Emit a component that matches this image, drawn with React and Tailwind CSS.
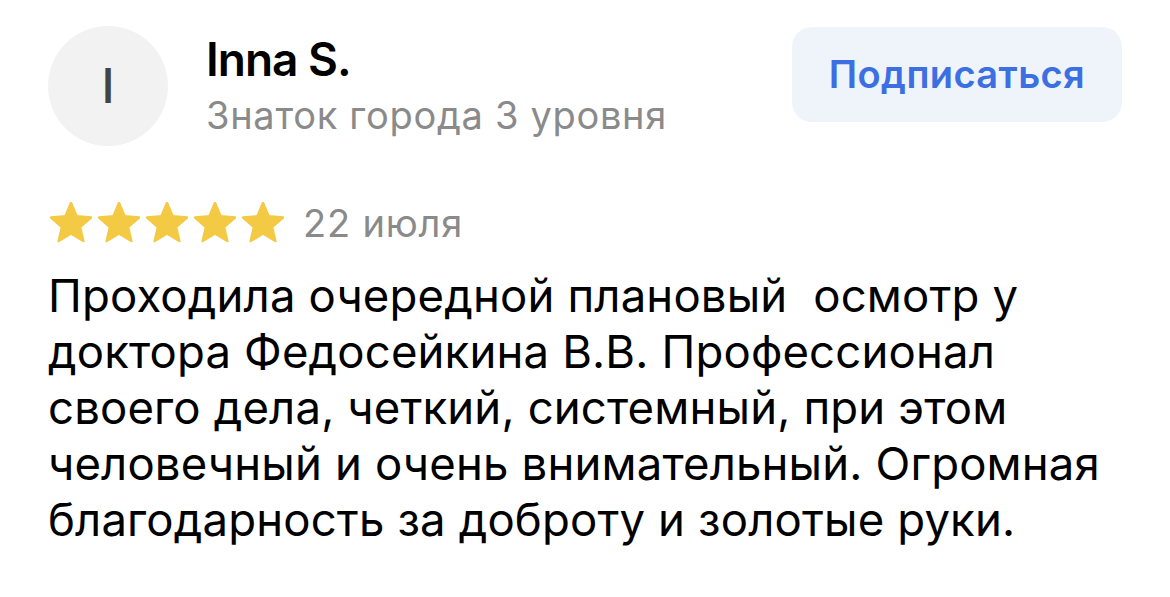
const STARS = [1, 2, 3, 4, 5];

const LINES = [
  "Проходила очередной плановый  осмотр у",
  "доктора Федосейкина В.В. Профессионал",
  "своего дела, четкий, системный, при этом",
  "человечный и очень внимательный. Огромная",
  "благодарность за доброту и золотые руки.",
];

function StarIcon() {
  return (
    <svg width="44" height="42" viewBox="0 0 44 42">
      <polygon
        points="22,1 27.58,14.31 41.97,15.51 31.03,24.94 34.34,38.99 22,31.5 9.66,38.99 12.97,24.94 2.03,15.51 16.42,14.31"
        fill="#f4c944"
        stroke="#f4c944"
        strokeWidth="2.5"
        strokeLinejoin="round"
      />
    </svg>
  );
}

export default function App() {
  return (
    <div
      className="w-[1170px] h-[597px] bg-white overflow-hidden"
      style={{ fontFamily: "Inter, sans-serif" }}
    >
      <div className="pl-[48px] pr-[48px] pt-[26px]">
        {/* HEADER */}
        <div className="flex items-start">
          <div className="w-[120px] h-[120px] shrink-0 rounded-full bg-[#f2f2f2] flex items-center justify-center text-[48px] font-medium text-[#444]">
            I
          </div>
          <div className="ml-[38px] pt-[7px]">
            <div className="text-[46px] leading-[52px] font-semibold tracking-[-1px] text-black">Inna S.</div>
            <div className="mt-[7px] text-[38px] leading-[46px] tracking-[0.7px] text-[#8a8a8a]">Знаток города 3 уровня</div>
          </div>
          <button className="ml-auto mt-px w-[330px] h-[95px] rounded-[20px] bg-[#eff3fa] text-[#3c6fe1] text-[38px] font-semibold tracking-[0.4px]">
            Подписаться
          </button>
        </div>

        {/* RATING */}
        <div className="flex items-center mt-[54px]">
          <div className="flex gap-[4px] ml-px">
            {STARS.map((s) => (
              <StarIcon key={s} />
            ))}
          </div>
          <span className="ml-[18px] text-[38px] leading-[46px] tracking-[0.8px] text-[#8a8a8a]">22 июля</span>
        </div>

        {/* TEXT */}
        <div className="mt-[22px] text-[45.5px] leading-[56px] tracking-[0.15px] text-black whitespace-pre">
          {LINES.map((l) => (
            <div key={l}>{l}</div>
          ))}
        </div>
      </div>
    </div>
  );
}
